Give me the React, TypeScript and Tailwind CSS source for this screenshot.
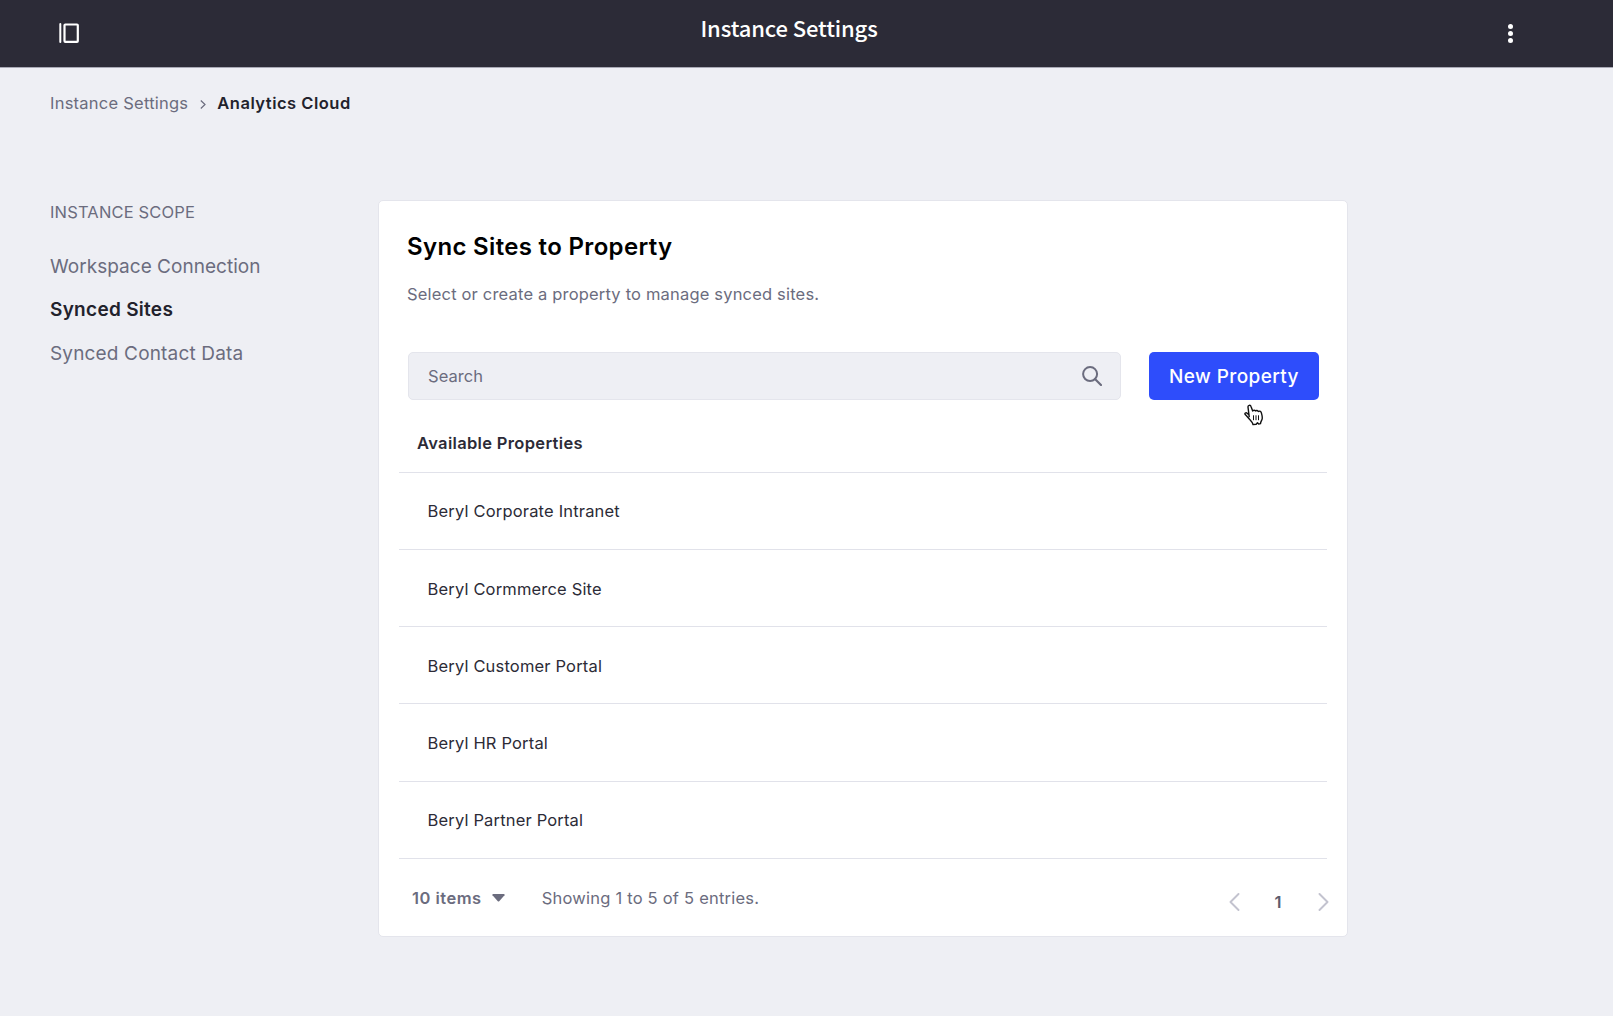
import React from "react";

const properties = [
  { name: "Beryl Corporate Intranet", row: "h-[77px]", spacing: "tracking-[0.18px]" },
  { name: "Beryl Cormmerce Site", row: "h-[77px] pt-[1px]", spacing: "tracking-[0.17px]" },
  { name: "Beryl Customer Portal", row: "h-[77px] pt-[1px]", spacing: "tracking-[0.17px]" },
  { name: "Beryl HR Portal", row: "h-[78px] pt-[1px]", spacing: "tracking-[0.17px]" },
  { name: "Beryl Partner Portal", row: "h-[77px]", spacing: "tracking-[0.17px]" },
];

function PanelIcon() {
  return (
    <svg width="20" height="20" viewBox="0 0 20 20" fill="none">
      <path d="M1.3 1V19" stroke="#fff" strokeWidth="2" strokeLinecap="round" />
      <rect x="5.500" y="1.500" width="13.300" height="17.300" rx="0.8" stroke="#fff" strokeWidth="2.200" />
    </svg>
  );
}

function HandCursor() {
  return (
    <svg width="20" height="22" viewBox="0 0 20 22" className="absolute left-[95px] top-[52px]">
      <path
        d="M5.2 12.6 4 3.1C3.8 1.2 6.4 .5 7 2.4l1.7 4.7c.3-1.2 2.2-1.2 2.8-.1.8-.9 2.3-.6 2.8.5.9-.7 2.6-.3 3 1.1.6 2.4 1.4 4.3.8 6.5-.3 1.3-1.5 2.4-1.6 4.5l-1.8.4-1.2-1.2-1.3 1.5-3.2.2C8.400 18 7 16.900 5.500 15.300 4 13.700 3 12.300 1.200 10.600.3 9.200 1.900 8.200 3.200 9.200l1.900 1.700"
        fill="#fff"
        stroke="#111"
        strokeWidth="1.400"
        strokeLinejoin="round"
        strokeLinecap="round"
      />
      <path d="M9.500 11.700v4.100M12 11.700v4.100M14.500 11.700v4.100" stroke="#111" strokeWidth="1" strokeLinecap="round" />
    </svg>
  );
}

export default function App() {
  return (
    <div className="flex min-h-screen flex-col bg-[#eeeff4] font-[Inter,sans-serif] text-[16.5px] leading-6 text-[#6b6c7e]">
      <header className="flex h-[68px] items-start justify-between border-b border-[#a9a9b5] bg-[#2c2b37] pr-[100px] pl-[59px]">
        <div className="w-[20px] pt-[23px]">
          <PanelIcon />
        </div>
        <h1 className="mr-[9px] pt-[11px] font-['Noto_Sans_CJK_JP',sans-serif] text-[22px] leading-8 font-medium tracking-[-0.12px] text-white">
          Instance Settings
        </h1>
        <div className="flex w-[5px] flex-col gap-[2px] pt-[24px]">
          <span className="size-[5px] rounded-full bg-white" />
          <span className="size-[5px] rounded-full bg-white" />
          <span className="size-[5px] rounded-full bg-white" />
        </div>
      </header>

      <nav className="mt-[23px] flex h-[24px] items-center pl-[50px]">
        <span className="tracking-[0.24px]">Instance Settings</span>
        <svg width="6" height="9" viewBox="0 0 6 9" fill="none" className="mt-[2px] ml-[12px]">
          <path d="M0.800 0.500 5 4.500 0.800 8.500" stroke="#6b6c7e" strokeWidth="1.200" />
        </svg>
        <span className="ml-[11px] font-semibold tracking-[0.5px] text-[#22222c]">Analytics Cloud</span>
      </nav>

      <main className="flex pt-[85px]">
        <aside className="w-[378px] shrink-0 pl-[50px]">
          <h2 className="tracking-[0.16px]">INSTANCE SCOPE</h2>
          <ul className="mt-[21px] text-[19px]">
            <li className="flex h-[43px] items-center tracking-[0.03px]">Workspace Connection</li>
            <li className="flex h-[44px] items-center font-semibold tracking-[0.29px] text-[#22222c]">Synced Sites</li>
            <li className="flex h-[43px] items-center tracking-[0.16px]">Synced Contact Data</li>
          </ul>
        </aside>

        <section className="h-[737px] w-[970px] rounded-[5px] border border-[#e4e5ec] bg-white">
          <div className="px-[28px]">
            <h2 className="mt-[30px] text-[24px] leading-8 font-semibold tracking-[0.33px] text-black">
              Sync Sites to Property
            </h2>
            <p className="mt-[19px] tracking-[0.18px]">Select or create a property to manage synced sites.</p>
          </div>

          <div className="mt-[46px] flex pl-[29px]">
            <div className="flex h-[48px] w-[713px] items-center justify-between rounded-[5px] border border-[#e4e5ec] bg-[#eeeff4] pr-[18.5px] pl-[19px]">
              <span className="tracking-[0.06px]">Search</span>
              <svg width="20" height="20" viewBox="0 0 20 20" fill="none">
                <circle cx="8.100" cy="8.100" r="7" stroke="#6b6c7e" strokeWidth="2" />
                <path d="m13 13 6 6" stroke="#6b6c7e" strokeWidth="2.200" strokeLinecap="round" />
              </svg>
            </div>
            <div className="relative ml-[28px]">
              <button className="flex h-[48px] w-[170px] items-center justify-center rounded-[5px] bg-[#2e4dfb] pt-[2px] text-[19px] font-medium tracking-[0.4px] text-white">
                New Property
              </button>
              <HandCursor />
            </div>
          </div>

          <div className="mr-[20px] ml-[20px]">
            <div className="flex h-[73px] items-center border-b border-[#e1e2ea] pt-[13px] pl-[18px] font-semibold tracking-[0.33px] text-[#2c2b37]">
              Available Properties
            </div>
            {properties.map((p) => (
              <div
                key={p.name}
                className={`flex items-center border-b border-[#e1e2ea] pl-[28.5px] text-[#2c2b37] ${p.row} ${p.spacing}`}
              >
                {p.name}
              </div>
            ))}
          </div>

          <footer className="flex items-start pt-[27px] pl-[33px]">
            <span className="font-semibold tracking-[0.5px]">10 items</span>
            <svg width="13" height="8" viewBox="0 0 13 8" className="mt-[8px] ml-[10px]">
              <path d="M1 0H12Q13 .2 12.500 1.200L7.200 7.200Q6.500 7.900 5.800 7.200L.5 1.200Q0 .2 1 0Z" fill="#6b6c7e" />
            </svg>
            <span className="ml-[37px] tracking-[0.22px]">Showing 1 to 5 of 5 entries.</span>
            <div className="mt-[4px] mr-[18.5px] ml-auto flex h-[24px] items-center">
              <svg width="11" height="18" viewBox="0 0 11 18" fill="none">
                <path d="M9.500 1 1.500 9l8 8" stroke="#c3c3cf" strokeWidth="1.900" strokeLinecap="round" strokeLinejoin="round" />
              </svg>
              <span className="w-[78px] pr-[1px] text-center font-semibold text-[#5c5c6e]">1</span>
              <svg width="11" height="18" viewBox="0 0 11 18" fill="none">
                <path d="m1.500 1 8 8-8 8" stroke="#c3c3cf" strokeWidth="1.900" strokeLinecap="round" strokeLinejoin="round" />
              </svg>
            </div>
          </footer>
        </section>
      </main>
    </div>
  );
}
